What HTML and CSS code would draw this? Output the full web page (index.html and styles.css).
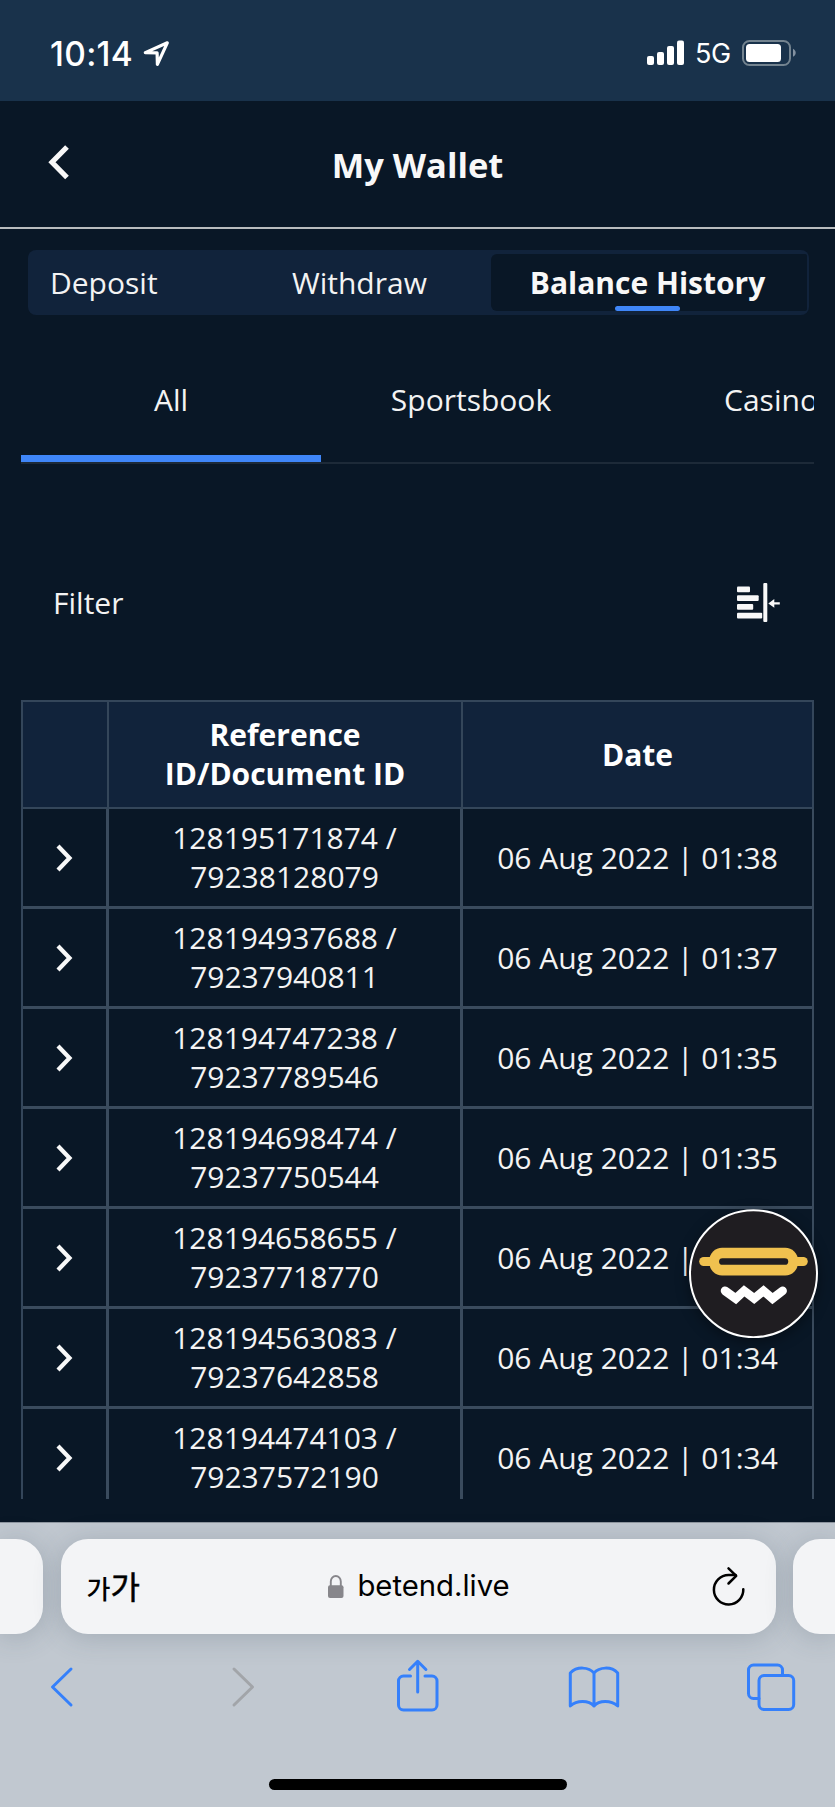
FILE: index.html
```html
<!DOCTYPE html>
<html lang="en">
<head>
<meta charset="utf-8">
<title>My Wallet</title>
<link rel="stylesheet" href="styles.css">
</head>
<body>
<div class="phone">
  <header class="status">
    <div class="status-left">
      <span class="clock">10:14</span>
      <svg class="icon-location" viewBox="143 40 28 28"><path d="M145.3 52.6 L167.3 42.8 L157.4 64.4 L157.1 52.9 Z" fill="none" stroke="#fff" stroke-width="3.2" stroke-linejoin="round"/></svg>
    </div>
    <div class="status-right">
      <svg class="icon-signal" viewBox="647 40 37 26" fill="#fff"><rect x="647" y="56" width="7" height="9" rx="2"/><rect x="657" y="52" width="7" height="13" rx="2"/><rect x="667" y="46" width="7" height="19" rx="2"/><rect x="677" y="40.500" width="7" height="24.500" rx="2"/></svg>
      <span class="network">5G</span>
      <svg class="icon-battery" viewBox="742 40 54 26"><rect x="743" y="41" width="47" height="24" rx="6.500" fill="none" stroke="#73838f" stroke-width="2"/><rect x="746" y="44" width="35" height="18" rx="3.500" fill="#fff"/><path d="M793 48.800c1.600.8 2.700 2.200 2.700 4s-1.100 3.300-2.700 4z" fill="#8391a0"/></svg>
    </div>
  </header>

  <div class="titlebar">
    <svg class="icon-back" viewBox="48 144 22 36"><path d="M67 147 L52 162.300 L67 177.500" fill="none" stroke="#f8f8f8" stroke-width="5.200"/></svg>
    <h1 class="title">My Wallet</h1>
  </div>

  <main class="page">
    <nav class="tabs">
      <a class="tab tab-deposit">Deposit</a>
      <a class="tab tab-withdraw">Withdraw</a>
      <a class="tab tab-active">Balance History<span class="tab-mark"></span></a>
    </nav>

    <nav class="cats">
      <a class="cat cat-active">All</a>
      <a class="cat">Sportsbook</a>
      <a class="cat">Casino</a>
    </nav>

    <div class="filter">
      <span>Filter</span>
      <svg class="icon-filter" viewBox="736 582 46 42" fill="#f8f8f8"><rect x="737" y="586.500" width="13" height="5.800" rx="1"/><rect x="737" y="595.300" width="21.700" height="5.700" rx="1"/><rect x="737" y="604" width="16.200" height="5.800" rx="1"/><rect x="737" y="612.800" width="25.200" height="5.700" rx="1"/><rect x="763.300" y="583" width="4" height="39" rx="1"/><path d="M768.300 603.400l6-4.400v3.200h5.500v2.400h-5.500v3.200z"/></svg>
    </div>

    <div class="table-wrap">
      <table class="history">
        <colgroup><col class="col-open"><col class="col-ref"><col class="col-date"></colgroup>
        <thead>
          <tr><th></th><th>Reference<br>ID/Document ID</th><th>Date</th></tr>
        </thead>
        <tbody>
          <tr><td><svg class="chev" viewBox="0 0 18 28"><path d="M3 2l11.500 12L3 26"/></svg></td><td>128195171874 /<br>79238128079</td><td>06 Aug 2022 | 01:38</td></tr>
          <tr><td><svg class="chev" viewBox="0 0 18 28"><path d="M3 2l11.500 12L3 26"/></svg></td><td>128194937688 /<br>79237940811</td><td>06 Aug 2022 | 01:37</td></tr>
          <tr><td><svg class="chev" viewBox="0 0 18 28"><path d="M3 2l11.500 12L3 26"/></svg></td><td>128194747238 /<br>79237789546</td><td>06 Aug 2022 | 01:35</td></tr>
          <tr><td><svg class="chev" viewBox="0 0 18 28"><path d="M3 2l11.500 12L3 26"/></svg></td><td>128194698474 /<br>79237750544</td><td>06 Aug 2022 | 01:35</td></tr>
          <tr><td><svg class="chev" viewBox="0 0 18 28"><path d="M3 2l11.500 12L3 26"/></svg></td><td>128194658655 /<br>79237718770</td><td>06 Aug 2022 | 01:34</td></tr>
          <tr><td><svg class="chev" viewBox="0 0 18 28"><path d="M3 2l11.500 12L3 26"/></svg></td><td>128194563083 /<br>79237642858</td><td>06 Aug 2022 | 01:34</td></tr>
          <tr><td><svg class="chev" viewBox="0 0 18 28"><path d="M3 2l11.500 12L3 26"/></svg></td><td>128194474103 /<br>79237572190</td><td>06 Aug 2022 | 01:34</td></tr>
        </tbody>
      </table>
    </div>
  </main>

  <div class="mascot">
    <svg viewBox="148 88 386 387">
      <circle cx="341" cy="281.500" r="190" fill="#1f1d21" stroke="#fff" stroke-width="6"/>
      <path d="M192 245H490" stroke="#f0c14f" stroke-width="27" stroke-linecap="round"/>
      <rect x="209" y="204" width="265" height="83" rx="38" fill="#f0c14f"/>
      <rect x="238" y="235" width="207" height="20" rx="10" fill="#1f1d21"/>
      <path d="M256 333L288 356L313 333L343 356L371 333L398 356L428 333" fill="none" stroke="#fff" stroke-width="26" stroke-linecap="round" stroke-linejoin="miter"/>
    </svg>
  </div>

  <footer class="browser">
    <div class="cards">
      <div class="card card-prev"></div>
      <div class="card address">
        <span class="reader"><span class="reader-small">가</span><span class="reader-large">가</span></span>
        <span class="site">
          <svg class="icon-lock" viewBox="328 1574 18 25"><path d="M331.800 1587v-5.500a5 5.500 0 0 1 10 0v5.500" fill="none" stroke="#87868b" stroke-width="1.900"/><rect x="329" y="1585.300" width="15.500" height="12.700" rx="2" fill="#87868b"/></svg>
          <span class="domain">betend.live</span>
        </span>
        <svg class="icon-reload" viewBox="710 1564 36 42" fill="none" stroke="#000" stroke-width="2.500" stroke-linecap="round" stroke-linejoin="round"><path d="M742.300 1588.300a14.700 14.700 0 1 1-14.700-14.200h7"/><path d="M727.500 1567.300l7.700 7.500-7.700 7.700"/></svg>
      </div>
      <div class="card card-next"></div>
    </div>
    <div class="toolbar">
      <svg class="tool" viewBox="36 1655 54 60"><path d="M71 1669L52.500 1687L71 1705"/></svg>
      <svg class="tool tool-off" viewBox="213 1655 54 60"><path d="M234 1669L252.500 1687L234 1705"/></svg>
      <svg class="tool" viewBox="390 1655 54 60"><path d="M410.500 1676h-7a5 5 0 0 0-5 5v24a5 5 0 0 0 5 5h28.500a5 5 0 0 0 5-5v-24a5 5 0 0 0-5-5h-7"/><path d="M417.700 1692v-30M409.500 1669.500l8.200-8.200 8.200 8.200"/></svg>
      <svg class="tool" viewBox="567 1655 54 60"><path d="M594 1706v-33c-5-6-17-7-23.700 0v33c6.500-6 18.500-6 23.700 0c5-6 17-6 23.700 0v-33c-6.500-7-18.500-6-23.700 0"/></svg>
      <svg class="tool" viewBox="744 1655 54 60"><rect x="759" y="1675.500" width="34.700" height="34" rx="5"/><path d="M759 1698.500h-5.500a5 5 0 0 1-5-5v-23.500a5 5 0 0 1 5-5h24a5 5 0 0 1 5 5v5.500"/></svg>
    </div>
    <div class="home"></div>
  </footer>
</div>
</body>
</html>
```

FILE: styles.css
```css
* { box-sizing: border-box; }

body {
  margin: 0;
  background: #091726;
}

svg { display: block; flex: none; }

.phone {
  position: relative;
  display: flex;
  flex-direction: column;
  width: 835px;
  height: 1807px;
  overflow: hidden;
  background: #091726;
  color: #f3f3f3;
  font: 30px/38.600px "Open Sans", "Noto Sans", sans-serif;
}

/* Status bar */
.status {
  display: flex;
  justify-content: space-between;
  height: 100.500px;
  padding: 40px 39px 0 50px;
  background: #19324b;
  color: #fff;
  font-family: Inter, "Liberation Sans", sans-serif;
  line-height: 26px;
}
.status-left, .status-right { display: flex; height: 26px; align-items: center; }
.clock { width: 93px; padding-top: 1px; font-size: 33.500px; font-weight: 500; letter-spacing: 0.300px; }
.icon-location { width: 28px; height: 28px; margin-top: 2px; }
.icon-signal { width: 37px; height: 26px; }
.network { width: 58px; padding: 2px 0 0 11px; font-size: 27px; font-weight: 400; letter-spacing: -0.300px; }
.icon-battery { width: 54px; height: 26px; }

/* Title */
.titlebar {
  display: grid;
  grid-template-columns: 70px 1fr 70px;
  align-items: center;
  height: 128.500px;
  border-bottom: 2px solid #b9bcbe;
}
.icon-back { width: 22px; height: 36px; margin: -3px 0 0 48px; }
.title {
  margin: 3px 0 0;
  color: #f8f8f8;
  font-size: 34.500px;
  font-weight: 700;
  text-align: center;
}

/* Main tabs */
.page { display: flex; flex-direction: column; height: 1292.500px; padding: 21px 21px 22px; }
.tabs {
  display: flex;
  height: 65px;
  margin: 0 5px 0 7px;
  padding: 4px 2px 4px 0;
  border-radius: 8px;
  background: #11233b;
}
.tab { display: flex; align-items: center; padding-top: 1px; }
.tab-deposit { width: 240px; padding-left: 22px; }
.tab-withdraw { width: 223px; padding-left: 24px; }
.tab-active {
  position: relative;
  flex: 1;
  justify-content: center;
  padding-right: 3px;
  border-radius: 6px 2px 2px 6px;
  background: #091726;
  color: #f8f8f8;
  font-weight: 700;
}
.tab-mark {
  position: absolute;
  bottom: 0;
  left: 50%;
  width: 65px;
  height: 5px;
  margin-left: -34px;
  border-radius: 3px;
  background: #3f86f8;
}

/* Category strip */
.cats {
  display: flex;
  height: 110px;
  margin-top: 39px;
  overflow: hidden;
  border-bottom: 2px solid #1d2a38;
}
.cat {
  flex: 0 0 300px;
  padding-top: 27px;
  text-align: center;
}
.cat-active { border-bottom: 7px solid #3f86f8; }

/* Filter row */
.filter {
  display: flex;
  justify-content: space-between;
  align-items: center;
  height: 42px;
  margin: 118px 32px 0 32px;
}
.filter span { padding-top: 1px; }
.icon-filter { width: 46px; height: 42px; }

/* History table */
.table-wrap { height: 800px; margin-top: 76px; overflow: hidden; }
.history {
  width: 793px;
  table-layout: fixed;
  border-spacing: 0;
  border-left: 2px solid #34465a;
}
.col-open { width: 86px; }
.col-ref { width: 354px; }
.col-date { width: 351px; }
.history th, .history td { padding: 1px 0 0; text-align: center; vertical-align: middle; }
.history th {
  height: 109px;
  border: solid #34465a;
  border-width: 2px 2px 2px 0;
  background: #11233b;
  color: #fff;
  font-weight: 700;
}
.history td {
  height: 100px;
  border: solid #3a4b5d;
  border-width: 0 3px 3px 0;
}
.history td:last-child { border-right-width: 2px; }
.chev { width: 18px; height: 28px; margin: 0 0 0 32px; fill: none; stroke: #f8f8f8; stroke-width: 4.200px; }

/* Floating badge */
.mascot {
  position: absolute;
  top: 1209px;
  left: 689px;
  width: 129px;
  height: 129px;
  border-radius: 50%;
  box-shadow: 0 4px 14px rgba(0, 0, 0, 0.4);
}

/* Browser controls */
.browser {
  display: flex;
  flex-direction: column;
  flex: 1;
  align-items: center;
  border-top: 1px solid #8e969f;
  background: #c1c8d0;
}
.cards {
  display: grid;
  grid-template-columns: 43px 715px 42px;
  gap: 17.500px;
  width: 835px;
  height: 94.500px;
  margin-top: 16.500px;
}
.card {
  border-radius: 27px;
  background: #f3f4f6;
  box-shadow: 0 3px 28px rgba(60, 75, 90, 0.24);
}
.card-prev { border-radius: 0 27px 27px 0; }
.card-next { border-radius: 27px 0 0 27px; }
.address {
  display: grid;
  grid-template-columns: 100px 1fr 100px;
  align-items: center;
  color: #000;
}
.reader {
  display: flex;
  align-items: baseline;
  padding: 1px 0 0 26px;
  font-family: "Noto Sans CJK KR", sans-serif;
}
.reader-small { font-size: 26px; font-weight: 500; }
.reader-large { font-size: 32px; font-weight: 400; -webkit-text-stroke: 0.500px #000; }
.site {
  display: flex;
  align-items: center;
  justify-content: center;
  gap: 12px;
  padding: 1px 0 0 1px;
  font-family: Inter, "Liberation Sans", sans-serif;
}
.icon-lock { width: 18px; height: 25px; }
.domain { font-size: 29.300px; }
.icon-reload { width: 36px; height: 42px; margin-left: 35px; }
.toolbar {
  display: flex;
  align-self: flex-start;
  justify-content: space-between;
  width: 762px;
  height: 60px;
  margin: 21.500px 0 0 36px;
}
.tool {
  width: 54px;
  height: 60px;
  fill: none;
  stroke: #3580fb;
  stroke-width: 3px;
  stroke-linecap: round;
  stroke-linejoin: round;
}
.tool-off { stroke: #a2a5a9; }
.home {
  width: 298px;
  height: 11px;
  margin-top: 64px;
  border-radius: 6px;
  background: #000;
}
```
